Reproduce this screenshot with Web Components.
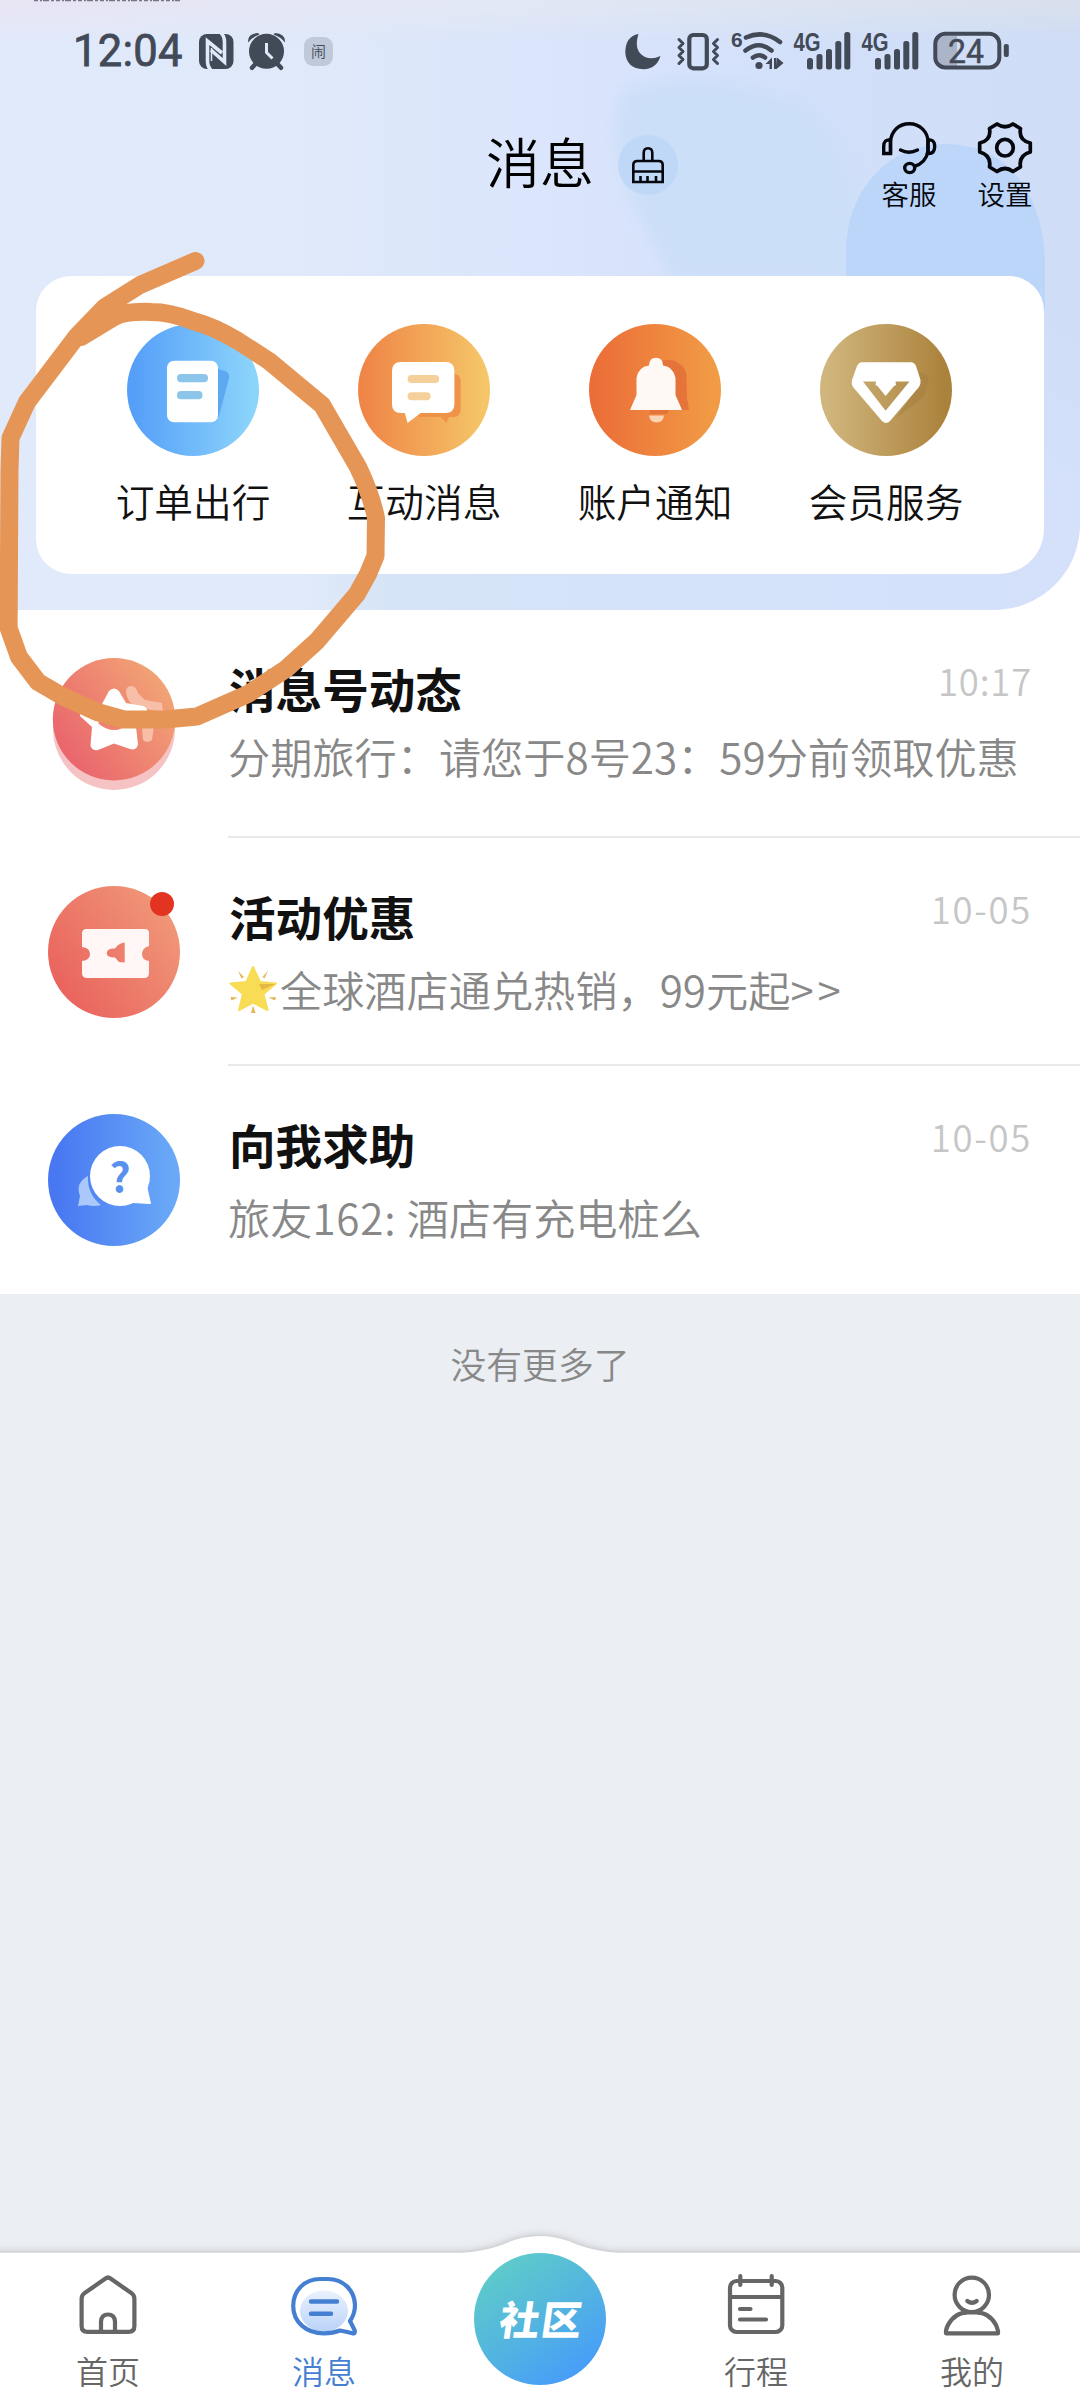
<!DOCTYPE html>
<html lang="zh-CN">
<head>
<meta charset="utf-8">
<title>消息</title>
<style>
  html, body { margin: 0; padding: 0; }
  body { width: 1080px; height: 2400px; overflow: hidden; background: #ebeef3; font-family: "Noto Sans CJK SC", sans-serif; font-weight: 350; color: #111; }
</style>
</head>
<body>
<message-page></message-page>
<script>
const define = (name, html) => {
  const t = document.createElement('template');
  t.innerHTML = html;
  customElements.define(name, class extends HTMLElement {
    constructor() {
      super();
      this.attachShadow({ mode: 'open' }).appendChild(t.content.cloneNode(true));
    }
  });
};

const grad = (a, b, diag) => `<defs><linearGradient id="g" x1="0" y1="${diag ? .9 : .5}" x2="1" y2="${diag ? 0.2 : .5}"><stop offset="0.05" stop-color="${a}"/><stop offset="0.95" stop-color="${b}"/></linearGradient></defs>`;
const disc = (a, b, body, diag) => ({ box: '0 0 132 132', body: `${grad(a, b, diag)}<circle cx="66" cy="66" r="66" fill="url(#g)"/>${body}` });

const signalBody = '<g fill="#424957"><text x="793.5" y="51" font-family="Liberation Sans" font-weight="700" font-size="26" textLength="27" lengthAdjust="spacingAndGlyphs">4G</text><rect x="807" y="58" width="6" height="11.5" rx="2.5"/><rect x="816.5" y="54" width="6" height="15.5" rx="2.5"/><rect x="826" y="49" width="6" height="20.5" rx="2.5"/><rect x="835.3" y="41" width="6" height="28.500" rx="2.5"/><rect x="844.3" y="32" width="6" height="37.500" rx="2.5"/></g>';

const ICONS = {
  nfc: { box: '196 26 40 50', body: '<rect x="199" y="34" width="34.500" height="35" rx="8" fill="#424957"/><g fill="none" stroke="#e0eafa" stroke-width="3.600"><path d="M211 70Q207.500 67 207.500 61V41L222 53"/><path d="M221 33Q224.500 36 224.500 42V62L211 50"/></g><path d="M211.500 48V61" stroke="#e0eafa" stroke-width="1.500"/>' },
  alarm: { box: '246 26 42 50', body: '<circle cx="266.500" cy="51.300" r="17.500" fill="#424957"/><g fill="none" stroke="#424957" stroke-width="4.500" stroke-linecap="round"><path d="M255 64.500L252 67.800M278 64.500L281 67.800"/></g><path d="M248.200 42.500Q247 34 258 33L259.500 34.500Q252 37 248.200 42.500ZM284.800 42.500Q286 34 275 33L273.500 34.500Q281 37 284.800 42.500Z" fill="#424957"/><path d="M266.500 43V52.500L272.500 58.500" fill="none" stroke="#dfe9f9" stroke-width="3"/>' },
  moon: { box: '622 26 42 50', body: '<path d="M638.500 34Q633 51 645 57Q652 60 660.500 56Q656.500 69 643.500 69.300Q626 68.500 625.300 52Q625.500 36.500 638.500 34Z" fill="#424957"/>' },
  vibrate: { box: '676 26 46 50', body: '<g fill="none" stroke="#424957" stroke-linejoin="round" stroke-linecap="round"><rect x="689.300" y="35" width="17.500" height="33.300" rx="4" stroke-width="4.200"/><path stroke-width="3" d="M679 39.500L683 43.500L679 47.500L683 51.500L679 55.500L683 59.500L679 63.500M717.500 39.500L713.500 43.500L717.500 47.500L713.500 51.500L717.500 55.500L713.500 59.500L717.500 63.500"/></g>' },
  wifi: { box: '730 26 56 50', body: '<text x="731" y="46.500" font-family="Liberation Sans" font-weight="700" font-size="21" fill="#424957">6</text><g fill="none" stroke="#424957" stroke-width="4.600" stroke-linecap="round"><path d="M746 37.500Q764 29.500 780 42"/><path d="M745.500 50.500Q759 40 771.500 50.500"/><path d="M753 57.500Q759 53 765 57.500"/></g><circle cx="759" cy="65.500" r="3.600" fill="#424957"/><path d="M765.500 64L772 57.500V69H769.500V64ZM774 58V69H776.500V69L783.500 63L777 57.500V66L776.500 58Z" fill="#424957"/>' },
  signal: { box: '792 26 60 50', body: signalBody },
  battery: { box: '932 26 78 50', body: '<path d="M957 36H945Q937 36 937 45V57Q937 66 945 66H957Z" fill="#abb5ca"/><rect x="935.300" y="33.800" width="64" height="33.600" rx="10" fill="none" stroke="#424957" stroke-width="4"/><rect x="1003.800" y="44" width="5" height="13" rx="2" fill="#424957"/><text x="948" y="62.500" font-family="Roboto" font-weight="400" font-size="34" textLength="36" lengthAdjust="spacingAndGlyphs" fill="#424957" stroke="#424957" stroke-width=".5">24</text>' },
  brush: { box: '618 135 60 60', body: '<circle cx="648" cy="165" r="30" fill="#bfd8f8"/><g fill="none" stroke="#05070d" stroke-width="2.600"><path d="M643.700 161V153Q643.700 148.300 648 148.300Q652.300 148.300 652.300 153V161"/><path d="M633.300 182V165Q633.300 161 637.500 161H658.500Q662.700 161 662.700 165V182ZM633.300 171.500H662.700M640.500 182V176M647.500 182V176M656 182V176"/></g>' },
  headset: { box: '881 120 56 56', body: '<g fill="none" stroke="#05070d" stroke-width="3.400"><path d="M890.500 154V142C891 131 899 123.800 909.300 123.800C920 123.800 928 132 928 142V151Q926 163 914 166.500"/><path d="M890.500 140Q883.700 139 883.700 146.500V153.500H890.500ZM928 140Q934.700 139 934.700 146.500Q934.700 154 928 153.500Z"/><path d="M900.500 150Q909 154.500 917.500 150" stroke-linecap="round"/><ellipse cx="909.700" cy="168" rx="5" ry="4.600"/></g>' },
  gear: { box: '977 120 56 56', body: '<g fill="none" stroke="#05070d" stroke-width="3.700" stroke-linejoin="round"><path d="M997 124Q1005 129.500 1013 124L1020.500 128.500C1019 137 1023 141.500 1030.300 143V152C1023 154 1019 158.500 1020.500 167L1013 171.500Q1005 165.500 997 171.500L989.500 167C991 158.500 987 154 979.700 152V143C987 141.500 991 137 989.500 128.500Z"/><circle cx="1005" cy="147.700" r="8.300"/></g>' },
  order: disc('#569ff9', '#8bd4fb', '<path d="M88 44L98 47Q103 49 102 54L92 92L86 96Z" fill="#5ca9f2"/><rect x="40" y="36.700" width="51" height="61.500" rx="7" fill="#fff"/><rect x="50" y="50" width="31" height="8.300" rx="4" fill="#8dc4e9"/><rect x="50" y="67" width="25.500" height="8.300" rx="4" fill="#8dc4e9"/>'),
  chat: disc('#ef8647', '#f5c568', '<path d="M92 50H97Q102.600 51 102.600 57V86Q102 92.500 96 93H91L88.500 99L83 93H60V86H92Z" fill="#ee9347"/><path d="M43 38H87.500Q96.400 38 96.400 47V80Q96.400 89 87.500 89H62.700L49.600 99L46.800 89H43Q34 89 34 80V47Q34 38 43 38Z" fill="#fff"/><rect x="49.600" y="51" width="31.500" height="8" rx="4" fill="#f5d09b"/><rect x="49.600" y="68.300" width="23" height="8" rx="4" fill="#f5d09b"/>'),
  bell: disc('#eb6e38', '#f19b45', '<path d="M74 36H83Q96 40 97.500 51L98 74L100 86H80L78 90H60Z" fill="#e5743a"/><path d="M41 86L47.500 71V54Q49 43 60 41.500Q60 34 67 33.700Q74 34 74 41.500Q84.500 43 86.500 54V71L93 86Z" fill="#fff9f6"/><path d="M60 91.500H75Q74 98.500 67.500 98.500Q61 98.500 60 91.500Z" fill="#fbd3b5"/>'),
  gem: disc('#d0b67d', '#ab823c', '<path d="M100 48Q109 50 108.500 56L104 73L76 94L90 74Z" fill="#a78140" opacity=".6"/><path fill-rule="evenodd" d="M42 38.300H91Q94.500 38.500 96 42L100.500 56Q101 60 99 63L70 97Q66 101 62 97L33 63Q31 60 32 56L37 42Q38.500 38.500 42 38.300ZM43 57.500L65.600 86.700L89.500 57.500H75.500L76 61L74 62L65.600 72L57.500 62L55.500 61L56 57.500Z" fill="#fff"/>'),
  star: { box: '0 0 132 132', body: `${grad('#e9606c', '#f2a475', 1)}<circle cx="66" cy="71" r="61" fill="#f5c3c3"/><circle cx="66" cy="61.300" r="61.200" fill="url(#g)"/><g fill="#f9c4ae" opacity=".9"><path d="M78 34Q78 28 83 28Q88 28 90 35L97 42L114 45L115 54L98 51L84 46Q79 42 78 34Z"/><path d="M94 68H106L104 82Q99 86 95 82Z"/></g><path d="M61 33Q66 28 71 33L78 45L95 48Q101 50 98 56L88 69L90 86Q89 93 82 91L66 85.500L50 92Q43 93 42.500 87L44 69L32 58Q31 54 37 50L54 46Z" fill="#fff"/><path d="M52 63Q66 75 80 63" fill="none" stroke="#ef816e" stroke-width="6"/>` },
  ticket: disc('#e9605c', '#f09778', '<path fill-rule="evenodd" d="M39 43H97Q101 43 101 47V60Q94 62 94 68Q94 74 101 75V87Q101 92 96 92H39Q34 92 34 87V75Q42 74 42 68Q42 62 34 61V47Q34 43 39 43ZM76.700 56.500Q71 57 67 62.500Q59 62 58.700 67.500Q59 71.500 67 71.500L71 76L76.700 76.500Z" fill="#fff6f5"/><circle cx="114" cy="18" r="12" fill="#e23421"/>', 1),
  help: disc('#4877f1', '#69a9f7', '<path d="M40 62Q27 69 32 82L30 92L39 91Q46 93 53 91Q39 80 40 62Z" fill="#abc8fb"/><circle cx="72" cy="62" r="30" fill="#fff"/><path d="M99 74L102.500 89.500L84 88.500Z" fill="#fff" stroke="#fff" stroke-width="1" stroke-linejoin="round"/><text x="72" y="77.500" text-anchor="middle" font-family="Noto Sans CJK SC" font-weight="700" font-size="41" fill="#5790ee">?</text>'),
  glow: { box: '230 968 49 50', body: '<path d="M254 970L261 985L277 986.500L264.500 997L268.500 1013L254 1005.500L240 1013L244 997L231.500 986.500L247.500 985Z" fill="#f8dc55" stroke="#f8dc55" stroke-width="2" stroke-linejoin="round"/><path d="M276.500 987L263 993L260 987Z" fill="#e3b843"/><path d="M239 974L245 980L242.500 981.500ZM269 973.500L265.500 981.500L263.500 980ZM231.500 1000L238.500 1000.500L232.500 1003.500ZM277 1000L269.500 1000.500L276 1003.500ZM254 1008.500L256.500 1016H252Z" fill="#e5b653"/>' },
  home: { box: '75 2272 66 66', body: '<g fill="none" stroke="#666" stroke-width="4.200" stroke-linejoin="round"><path d="M105.500 2278.500Q108 2276.500 110.500 2278.500L132 2293.500Q134.400 2295.500 134.400 2299V2326Q134.400 2331.900 128.500 2331.900H87.500Q81.600 2331.900 81.600 2326V2299Q81.600 2295.500 84 2293.500Z"/><path d="M101 2332V2321.500Q101.500 2314.500 108 2314.500Q114.500 2314.500 115 2321.500V2332"/></g>' },
  message: { box: '291 2272 66 66', body: '<defs><linearGradient id="m" x1="0" x2="0" y1="0" y2="1"><stop stop-color="#eaf2fe"/><stop offset="1" stop-color="#bad3f9"/></linearGradient></defs><ellipse cx="324" cy="2311" rx="24" ry="20.500" fill="url(#m)"/><path d="M320 2279C304 2279 293.200 2291 293.200 2306C293.200 2322 306 2333.300 324 2333.300Q333 2333.300 340 2330.500Q348 2332 353.500 2333.600Q355.500 2333 354.500 2330L350 2321Q355 2314 355 2305C354.500 2290 343 2279 328 2279Z" fill="none" stroke="#447fd2" stroke-width="4.200" stroke-linejoin="round"/><path d="M311 2301.500H337M311 2313.700H331" stroke="#447fd2" stroke-width="4.500" stroke-linecap="round"/>' },
  calendar: { box: '723 2272 66 66', body: '<g fill="none" stroke="#666" stroke-width="4.200" stroke-linecap="round"><rect x="730" y="2281" width="52.300" height="51" rx="6.500"/><path d="M730 2297H782M740.300 2276V2285M771.700 2276V2285M740 2309H750.500M740 2319.500H766"/></g>' },
  person: { box: '939 2272 66 66', body: '<g fill="none" stroke="#666" stroke-width="4.200" stroke-linecap="round" stroke-linejoin="round"><circle cx="971.800" cy="2294.800" r="17.200"/><path d="M946 2333Q945.500 2330 948 2325Q954.500 2312.500 968 2312.300H976Q989.500 2312.500 996 2325Q998.500 2331 998 2333.300H946"/><path d="M967.300 2301Q972 2304.500 976.700 2301"/></g>' }
};

customElements.define('ui-icon', class extends HTMLElement {
  connectedCallback() {
    if (this.shadowRoot) return;
    const i = ICONS[this.getAttribute('name')];
    const [, , w, h] = i.box.split(' ');
    this.attachShadow({ mode: 'open' }).innerHTML =
      `<style>:host{display:block;flex:none;width:${w}px;height:${h}px}svg{display:block}</style><svg width="${w}" height="${h}" viewBox="${i.box}" aria-hidden="true">${i.body}</svg>`;
  }
});

define('status-bar', `<style>
  :host { display: flex; align-items: center; height: 102px; padding: 0 70px 0 73px; box-sizing: border-box; color: #424957; }
  .time { width: 123px; font: 400 43.5px/51px Roboto, sans-serif; -webkit-text-stroke: .8px #424957; white-space: nowrap; letter-spacing: .3px; }
  .badge { width: 29px; height: 29px; margin-left: 16px; border-radius: 9px; background: #c0c9da; font-size: 15px; line-height: 27px; text-align: center; }
  .right { display: flex; margin-left: auto; }
</style>
<span class="time">12:04</span><ui-icon name="nfc"></ui-icon><ui-icon name="alarm" style="margin-left:10px"></ui-icon><span class="badge">闹</span>
<div class="right"><ui-icon name="moon"></ui-icon><ui-icon name="vibrate" style="margin-left:12px"></ui-icon><ui-icon name="wifi" style="margin-left:8px"></ui-icon><ui-icon name="signal" style="margin-left:6px"></ui-icon><ui-icon name="signal" style="margin-left:8px"></ui-icon><ui-icon name="battery" style="margin-left:12px"></ui-icon></div>`);

define('header-action', `<style>
  :host { display: flex; flex-direction: column; align-items: center; gap: 1px; width: 56px; font-size: 27.500px; line-height: 32px; color: #05070d; white-space: nowrap; }
</style><slot name="icon"></slot><span><slot></slot></span>`);

define('title-bar', `<style>
  :host { display: flex; height: 156px; margin-top: 18px; padding: 0 47px 0 486px; box-sizing: border-box; align-items: flex-start; }
  h1 { margin: 6px 24px 0 0; font-size: 54px; font-weight: 350; line-height: 70px; color: #000; }
  .clean { margin-top: 15px; }
  .actions { display: flex; gap: 40px; margin-left: auto; }
</style><h1>消息</h1><ui-icon class="clean" name="brush"></ui-icon>
<div class="actions"><header-action><ui-icon slot="icon" name="headset"></ui-icon>客服</header-action><header-action><ui-icon slot="icon" name="gear"></ui-icon>设置</header-action></div>`);

define('quick-entry', `<style>
  :host { display: flex; flex-direction: column; align-items: center; gap: 21px; width: 231px; font-size: 38.700px; line-height: 46px; color: #111; }
</style><slot name="icon"></slot><span><slot></slot></span>`);

define('quick-card', `<style>
  :host { display: flex; height: 298px; margin: 0 36px; padding: 48px 0 0 41.500px; box-sizing: border-box; background: #fff; border-radius: 35px 35px 45px 35px; }
</style><slot></slot>`);

define('header-scene', `<style>
  :host { display: block; position: absolute; inset: 0; z-index: 0; }
  svg { display: block; }
</style>
<svg width="1080" height="610" viewBox="0 0 1080 610" aria-hidden="true">
<defs>
<linearGradient id="base" x1="0" x2="1" y1="0" y2="0"><stop stop-color="#e1eafb"/><stop offset=".3" stop-color="#dfe9fa"/><stop offset=".5" stop-color="#dbe5fc"/><stop offset=".8" stop-color="#d1dff9"/><stop offset="1" stop-color="#cfddf7"/></linearGradient>
<linearGradient id="top" x1="0" x2="1" y1="0" y2="0"><stop stop-color="#e8e4f4"/><stop offset=".45" stop-color="#e2e8f4"/><stop offset="1" stop-color="#d8dfec"/></linearGradient>
<linearGradient id="blue" x1="0" x2="0" y1="0" y2="1"><stop stop-color="#bdd6fa"/><stop offset="1" stop-color="#bad6f8"/></linearGradient>
<filter id="s" x="-20%" y="-20%" width="140%" height="140%"><feGaussianBlur stdDeviation="8"/></filter>
<linearGradient id="foot" x1="0" x2="1" y1="0" y2="0"><stop offset=".28" stop-color="#e1eafa"/><stop offset=".36" stop-color="#d5e4f6"/><stop offset=".6" stop-color="#d4e3f9"/><stop offset=".85" stop-color="#d4e1fa"/><stop offset="1" stop-color="#d5e1fa"/></linearGradient>
<linearGradient id="side" x1="0" x2="0" y1="300" y2="520" gradientUnits="userSpaceOnUse"><stop stop-color="#d5e1fa" stop-opacity="0"/><stop offset="1" stop-color="#d5e1fa"/></linearGradient>
<linearGradient id="fade" x1="0" x2="0" y1="0" y2="1"><stop stop-color="#fff"/><stop offset=".3" stop-color="#ccc"/><stop offset="1" stop-color="#000"/></linearGradient>
<mask id="k"><rect width="1080" height="42" fill="url(#fade)"/></mask>
</defs>
<path d="M0 0H1080V525Q1076 600 996 610H0Z" fill="url(#base)"/>
<path d="M622 90Q700 60 810 105Q870 180 850 280H672L645 230Q600 150 622 90Z" fill="#cbdff8" filter="url(#s)" opacity=".85"/>
<path d="M846 300V245C850 186 890 144 946 144C1002 144 1042 186 1045 260V310Z" fill="url(#blue)"/>
<rect x="1000" y="300" width="80" height="262" fill="url(#side)"/>
<path d="M0 560H1080V610H0Z" fill="url(#foot)"/>
<rect width="1080" height="42" fill="url(#top)" mask="url(#k)"/>
<path d="M34 .5H180" stroke="#777584" stroke-width="1.500" stroke-dasharray="4 2 2 1 6 2 3 2"/>
</svg>`);

define('message-header', `<style>
  :host { display: block; position: relative; height: 610px; overflow: hidden; border-bottom-right-radius: 86px; }
  .content { position: relative; }
</style><header-scene></header-scene><div class="content"><status-bar></status-bar><title-bar></title-bar>
<quick-card>
<quick-entry><ui-icon slot="icon" name="order"></ui-icon>订单出行</quick-entry>
<quick-entry><ui-icon slot="icon" name="chat"></ui-icon>互动消息</quick-entry>
<quick-entry><ui-icon slot="icon" name="bell"></ui-icon>账户通知</quick-entry>
<quick-entry><ui-icon slot="icon" name="gem"></ui-icon>会员服务</quick-entry>
</quick-card></div>`);

define('message-row', `<style>
  :host { display: flex; height: 228px; padding: 0 0 0 48px; box-sizing: border-box; background: #fff; }
  .icon { padding-top: 48px; }
  .body { flex: 1; margin-left: 48px; padding: 48px 48px 0 0; border-bottom: var(--line, 2px solid #e9e9e9); }
  .head { display: flex; justify-content: space-between; align-items: flex-start; }
  .name { font-size: 46.600px; font-weight: 700; line-height: 60px; color: #111; padding-left: 1px; }
  .time { font-size: 36.500px; line-height: 46px; color: #c6c6c6; letter-spacing: var(--ls, .8px); }
  .text { display: flex; margin-top: var(--gap, 13px); font-size: 42.200px; line-height: 60px; color: #888; white-space: pre; }
</style>
<div class="icon"><slot name="icon"></slot></div>
<div class="body"><div class="head"><span class="name"><slot name="name"></slot></span><span class="time"><slot name="time"></slot></span></div><div class="text"><slot></slot></div></div>`);

define('tab-item', `<style>
  :host { display: flex; flex-direction: column; align-items: center; gap: 12px; width: 216px; padding-top: 19px; font-size: 32px; line-height: 40px; color: #666; }
  :host([active]) { color: #447fd2; }
</style><slot name="icon"></slot><span><slot></slot></span>`);

define('tab-bar', `<style>
  :host { display: flex; position: relative; height: 147px; }
  .plate { position: absolute; left: 0; top: -33px; z-index: 0; }
  tab-item, .center { position: relative; }
  .center { display: flex; width: 216px; justify-content: center; }
  .disc { display: flex; width: 132px; height: 132px; align-items: center; justify-content: center; border-radius: 50%; background: linear-gradient(145deg, #5ecbca 12%, #52b2e2 55%, #469bfb 90%); }
  .disc span { padding: 0 0 3px 3px; color: #fff; font-size: 40px; font-weight: 900; line-height: 50px; letter-spacing: 2px; transform: skewX(-8deg); }
</style>
<svg class="plate" width="1080" height="180" viewBox="0 2220 1080 180" aria-hidden="true">
<defs><filter id="b" x="-5%" y="-20%" width="110%" height="140%"><feGaussianBlur stdDeviation="4"/></filter></defs>
<path d="M-20 2252.700H461Q482 2252 503 2244.500Q521 2236 540 2236Q559 2236 577 2244.500Q598 2252 619 2252.700H1100V2410H-20Z" fill="#a5a5a5" opacity=".8" filter="url(#b)"/>
<path d="M0 2252.700H461Q482 2252 503 2244.500Q521 2236 540 2236Q559 2236 577 2244.500Q598 2252 619 2252.700H1080V2400H0Z" fill="#fff"/></svg>
<tab-item><ui-icon slot="icon" name="home"></ui-icon>首页</tab-item>
<tab-item active><ui-icon slot="icon" name="message"></ui-icon>消息</tab-item>
<div class="center"><div class="disc"><span>社区</span></div></div>
<tab-item><ui-icon slot="icon" name="calendar"></ui-icon>行程</tab-item>
<tab-item><ui-icon slot="icon" name="person"></ui-icon>我的</tab-item>`);

define('pen-mark', `<style>
  :host { display: block; position: absolute; left: 0; top: 240px; z-index: 5; pointer-events: none; }
  svg { display: block; }
</style>
<svg width="400" height="500" viewBox="0 240 400 500" aria-hidden="true"><path d="M195.500 261L140 285L105 307L77 336L27 402L10.500 438L9.500 470L8.600 628L19 657L38 682L62 696L97 712L124 719.500L165 719.500L197 716.500L248 694L286 669L317 641L357 594L368 574L375.500 556L376 518Q371 494 358 467L322 405L269 361L238 341Q215 327 193 321Q170 312 151.500 312Q125 311 114 317L81 337" fill="none" stroke="#e59657" stroke-width="18" stroke-linecap="round" stroke-linejoin="round"/><path d="M105 306L127 306L114 320L81 337Z" fill="#e59657"/></svg>`);

define('message-page', `<style>
  :host { display: flex; flex-direction: column; position: relative; width: 1080px; height: 2400px; overflow: hidden; background: #fff; }
  main { flex: 1; background: #ebeef3; }
  .end { margin: 0; padding-top: 39px; text-align: center; font-size: 35.800px; line-height: 60px; color: #888; }
</style>
<message-header></message-header>
<section>
<message-row style="--gap:8px"><ui-icon slot="icon" name="star"></ui-icon><span slot="name">消息号动态</span><span slot="time">10:17</span>分期旅行：请您于8号23：59分前领取优惠</message-row>
<message-row style="--ls:1.7px"><ui-icon slot="icon" name="ticket"></ui-icon><span slot="name">活动优惠</span><span slot="time">10-05</span><ui-icon name="glow" style="margin:6px 2px 0 1px"></ui-icon>全球酒店通兑热销，99元起<span style="letter-spacing:4px">&gt;&gt;</span></message-row>
<message-row style="--ls:1.7px;--line:0"><ui-icon slot="icon" name="help"></ui-icon><span slot="name">向我求助</span><span slot="time">10-05</span><span>旅友<span style="letter-spacing:.8px">162: </span>酒店有充电桩么</span></message-row>
</section>
<main><p class="end">没有更多了</p></main>
<tab-bar></tab-bar>
<pen-mark></pen-mark>`);
</script>
</body>
</html>
